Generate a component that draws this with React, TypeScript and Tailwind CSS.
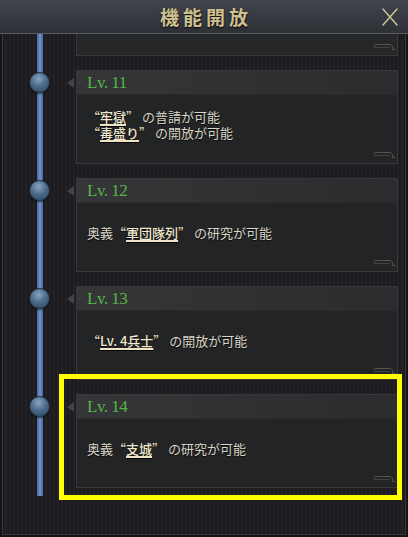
import React from 'react';

type Part = { text: string; hl?: boolean; q?: 'open' | 'close' };

interface Unlock {
  level: string;
  lines: Part[][];
}

const unlocks: Unlock[] = [
  {
    level: 'Lv. 11',
    lines: [
      [{ text: '“', q: 'open' }, { text: '牢獄', hl: true }, { text: '”', q: 'close' }, { text: 'の普請が可能' }],
      [{ text: '“', q: 'open' }, { text: '毒盛り', hl: true }, { text: '”', q: 'close' }, { text: 'の開放が可能' }],
    ],
  },
  {
    level: 'Lv. 12',
    lines: [
      [{ text: '奥義' }, { text: '“', q: 'open' }, { text: '軍団隊列', hl: true }, { text: '”', q: 'close' }, { text: 'の研究が可能' }],
    ],
  },
  {
    level: 'Lv. 13',
    lines: [[{ text: '“', q: 'open' }, { text: 'Lv. 4兵士', hl: true }, { text: '”', q: 'close' }, { text: 'の開放が可能' }]],
  },
  {
    level: 'Lv. 14',
    lines: [
      [{ text: '奥義' }, { text: '“', q: 'open' }, { text: '支城', hl: true }, { text: '”', q: 'close' }, { text: 'の研究が可能' }],
    ],
  },
];

const Ornament = () => (
  <svg width="22" height="7" viewBox="0 0 22 7" className="absolute bottom-[4px] right-[1px]">
    <path d="M0.5 0.5 H16.5 L18.5 2.5 V5.5 H21.5" fill="none" stroke="#55544e" strokeWidth="1" />
    <path d="M0.5 0.5 V3.5 H15.5" fill="none" stroke="#45443f" strokeWidth="1" />
  </svg>
);

const TextPart = ({ p }: { p: Part }) => {
  if (p.hl)
    return (
      <span className="inline-block h-[15px] leading-[15px] text-[#f1e9cf] font-medium underline decoration-[#eee3c4] decoration-2 underline-offset-[2px]">
        {p.text}
      </span>
    );
  if (p.q === 'open')
    return (
      <span className="inline-block h-[15px] leading-[15px] text-[#ece4c8] [font-feature-settings:'fwid']">
        {p.text}
      </span>
    );
  if (p.q === 'close')
    return (
      <span className="inline-block h-[15px] leading-[15px] mr-[3px] text-[#ece4c8] [font-feature-settings:'fwid']">
        {p.text}
      </span>
    );
  return <span className="inline-block h-[15px] leading-[15px]">{p.text}</span>;
};

const UnlockRow = ({ item }: { item: Unlock }) => (
  <div className="flex">
    <div className="w-[73px] shrink-0 h-[25px] flex items-center">
      <div className="ml-[26px] w-[21px] h-[21px] rounded-full relative z-10 border border-[#1d2b3a] bg-[radial-gradient(circle_at_45%_30%,#8aa4bf_0%,#4d6c8c_45%,#2b4259_100%)] shadow-[0_1px_2px_rgba(0,0,0,0.6)]" />
      <div className="ml-auto mr-[2px] w-0 h-0 border-y-[5px] border-y-transparent border-r-[7px] border-r-[#424345]" />
    </div>
    <div className="flex-1 h-[94px] flex flex-col border border-[#37383a] bg-[#232425]">
      <div className="h-[24px] shrink-0 flex items-center pl-[10px] bg-gradient-to-r from-[#353637] to-[#2b2c2d] border-b border-[#2a2b2c]">
        <span className="text-[17px] leading-none tracking-[-0.5px] text-[#55b447] [font-family:'Liberation_Serif',serif]">
          {item.level}
        </span>
      </div>
      <div className="relative flex-1 flex flex-col justify-center gap-[1px] pl-[10px] pb-[9px]">
        {item.lines.map((line, i) => (
          <div
            key={i}
            className="h-[15px] leading-[15px] text-[13px] text-[#d9d5c9] [font-family:'Noto_Sans_CJK_JP',sans-serif] [text-shadow:0_1px_1px_rgba(0,0,0,0.8)]"
          >
            {line.map((p, j) => (
              <TextPart key={j} p={p} />
            ))}
          </div>
        ))}
        <Ornament />
      </div>
    </div>
  </div>
);

export default function App() {
  return (
    <div className="w-[408px] h-[537px] relative overflow-hidden bg-[#151416] flex flex-col">
      {/* Header */}
      <header className="h-[34px] shrink-0 relative flex items-center justify-center bg-gradient-to-b from-[#42454c] to-[#2e3036] border-b border-[#585b62]">
        <h1 className="text-[19px] leading-none font-bold tracking-[4px] pl-[4px] text-[#cfc08f] [font-family:'Noto_Sans_CJK_JP',sans-serif] [text-shadow:0_1px_2px_rgba(0,0,0,0.9)]">
          機能開放
        </h1>
        <button className="absolute right-[10px] top-[8px] w-[16px] h-[18px]">
          <svg width="16" height="18" viewBox="0 0 16 18">
            <path d="M1 1 L15 17 M15 1 L1 17" stroke="#d2c79f" strokeWidth="1.4" strokeLinecap="round" />
          </svg>
        </button>
      </header>

      {/* Body */}
      <div className="relative flex-1 mx-[2px] mb-[2px] border-x border-b border-[#39383b] bg-[repeating-linear-gradient(90deg,#1c1b1e_0px,#1c1b1e_2px,#232125_2px,#232125_4px)]">
        <div className="absolute left-[34px] top-0 h-[462px] w-[6px] bg-gradient-to-r from-[#46629a] via-[#7495d0] to-[#46629a]" />

        <div className="flex flex-col gap-[14px] pr-[7px]">
          {/* Partially scrolled-out card */}
          <div className="flex">
            <div className="w-[73px] shrink-0" />
            <div className="relative flex-1 h-[22px] border-x border-b border-[#37383a] bg-[#262728]">
              <Ornament />
            </div>
          </div>

          {unlocks.map((u) => (
            <UnlockRow key={u.level} item={u} />
          ))}
        </div>
      </div>

      {/* Highlight */}
      <div className="absolute left-[59px] top-[374px] w-[343px] h-[126px] border-[5px] border-[#ffff00] pointer-events-none" />
    </div>
  );
}
